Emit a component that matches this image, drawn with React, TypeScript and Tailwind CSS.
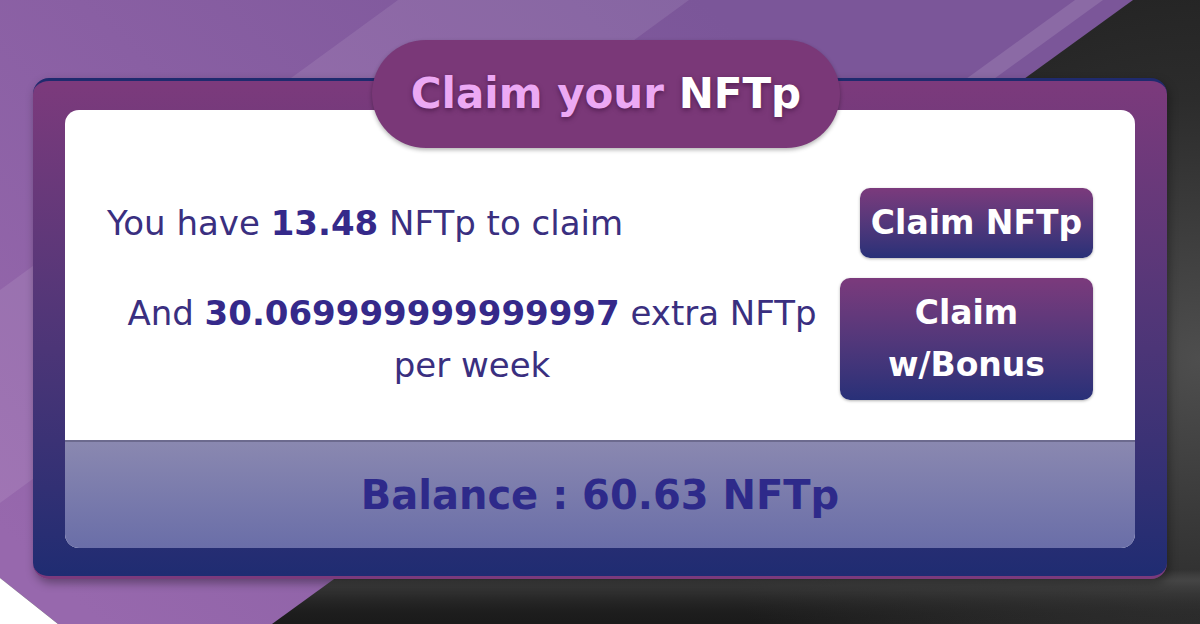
import React from "react"

const font = { fontFamily: '"DejaVu Sans", "Noto Sans", sans-serif' }

function Backdrop() {
  return (
    <svg className="absolute inset-0" width="1200" height="624" viewBox="0 0 1200 624">
      <defs>
        <radialGradient id="darkGlow" gradientUnits="userSpaceOnUse" cx="1200" cy="360" r="520">
          <stop offset="0" stopColor="#4e4e4e" />
          <stop offset="0.5" stopColor="#2c2c2c" />
          <stop offset="1" stopColor="#1b1b1b" />
        </radialGradient>
        <linearGradient id="floorGlow" gradientUnits="userSpaceOnUse" x1="0" y1="570" x2="0" y2="624">
          <stop offset="0" stopColor="#555" stopOpacity="0" />
          <stop offset="0.2" stopColor="#4a4a4a" stopOpacity="0.8" />
          <stop offset="1" stopColor="#1b1b1b" stopOpacity="0" />
        </linearGradient>
        <linearGradient id="purpleBg" gradientUnits="userSpaceOnUse" x1="700" y1="0" x2="100" y2="624">
          <stop offset="0" stopColor="#7b5699" />
          <stop offset="1" stopColor="#9768ad" />
        </linearGradient>
      </defs>
      <rect width="1200" height="624" fill="url(#darkGlow)" />
      <rect width="1200" height="624" fill="url(#floorGlow)" />
      <polygon points="0,0 1133,0 272,624 58,624 0,578" fill="url(#purpleBg)" />
      <polygon points="398,0 689,0 0,503 0,290" fill="#ffffff" opacity="0.09" />
      <polygon points="1075,0 1103,0 965,100 937,100" fill="#ffffff" opacity="0.12" />
      <polygon points="0,578 58,624 0,624" fill="#ffffff" />
    </svg>
  )
}

export default function App() {
  return (
    <div className="relative w-[1200px] h-[624px] overflow-hidden bg-[#1b1b1b]" style={font}>
      <Backdrop />

      <div className="relative pt-[78px] pl-[33px]">
        <div className="relative w-[1134px] rounded-[16px] border-t-[3px] border-b-[3px] border-t-[#1f2a6e] border-b-[#7b3a7c] bg-gradient-to-b from-[#7c3a7c] to-[#1f2c72] pl-[32px] pr-[32px] pt-[29px] pb-[28px] shadow-[2px_4px_10px_rgba(0,0,0,0.35)]">
          {/* title tab sitting over the frame's top edge */}
          <div className="absolute left-[339px] top-[-41px] z-10 flex h-[108px] w-[468px] items-center justify-center rounded-full bg-[#7a3878] shadow-[0_2px_4px_rgba(0,0,0,0.3)]">
            <h1 className="text-[42px] font-bold leading-none [text-shadow:0_2px_5px_rgba(50,10,50,0.55)]">
              <span className="text-[#eca9f4]">Claim your</span> <span className="text-white">NFTp</span>
            </h1>
          </div>

          <div className="overflow-hidden rounded-[14px] bg-white">
            <div className="pt-[78px] pb-[40px] pl-[42px] pr-[42px] text-[34px] text-[#3a2f80]">
              <div className="flex items-center justify-between">
                <p className="leading-none">
                  You have <b className="text-[#35298a]">13.48</b> NFTp to claim
                </p>
                <button className="flex h-[70px] w-[233px] items-center justify-center rounded-[10px] bg-gradient-to-b from-[#7b3a7c] to-[#283078] text-[33px] font-bold text-white shadow-[0_1px_3px_rgba(0,0,0,0.3)]">
                  Claim NFTp
                </button>
              </div>

              <div className="mt-[20px] flex items-center justify-between">
                <p className="w-[730px] text-center leading-[52px]">
                  And <b className="text-[#35298a]">30.069999999999997</b> extra NFTp per week
                </p>
                <button className="flex h-[122px] w-[253px] flex-col items-center justify-center rounded-[10px] bg-gradient-to-b from-[#7b3a7c] to-[#283078] text-[33px] font-bold leading-[52px] text-white shadow-[0_1px_3px_rgba(0,0,0,0.3)]">
                  <span>Claim</span>
                  <span>w/Bonus</span>
                </button>
              </div>
            </div>

            <div className="flex h-[108px] items-center justify-center border-t-2 border-[#6c6a8e] bg-gradient-to-b from-[#8a88b0] to-[#6a6ea8]">
              <p className="text-[40px] font-bold text-[#2e2a8a]">Balance : 60.63 NFTp</p>
            </div>
          </div>
        </div>
      </div>
    </div>
  )
}
